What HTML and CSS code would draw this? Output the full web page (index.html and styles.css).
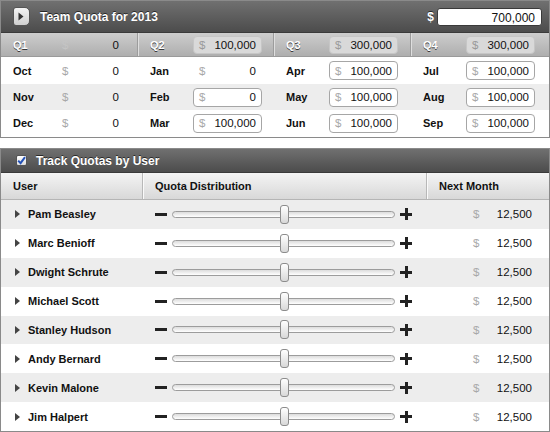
FILE: index.html
```html
<!DOCTYPE html>
<html>
<head>
<meta charset="utf-8">
<link rel="stylesheet" href="styles.css">
</head>
<body>
<div class="panel quota">
  <div class="qhead">
    <span class="disc-btn"><svg width="6" height="9" viewBox="0 0 6 9"><path d="M0.5 0.5 L5.5 4.5 L0.5 8.5 Z" fill="#333"/></svg></span>
    <span class="title">Team Quota for 2013</span>
    <span class="spacer"></span>
    <span class="total-cur">$</span>
    <span class="total-input">700,000</span>
  </div>
  <div class="grid qrow">
    <div class="cell"><span class="lbl">Q1</span><span class="box plain"><span class="d">$</span><span class="v">0</span></span></div>
    <div class="cell"><span class="lbl">Q2</span><span class="box qbox"><span class="d">$</span><span class="v">100,000</span></span></div>
    <div class="cell"><span class="lbl">Q3</span><span class="box qbox"><span class="d">$</span><span class="v">300,000</span></span></div>
    <div class="cell"><span class="lbl">Q4</span><span class="box qbox"><span class="d">$</span><span class="v">300,000</span></span></div>
  </div>
  <div class="grid mrow r1">
    <div class="cell"><span class="lbl">Oct</span><span class="box plain"><span class="d">$</span><span class="v">0</span></span></div>
    <div class="cell"><span class="lbl">Jan</span><span class="box plain"><span class="d">$</span><span class="v">0</span></span></div>
    <div class="cell"><span class="lbl">Apr</span><span class="box input"><span class="d">$</span><span class="v">100,000</span></span></div>
    <div class="cell"><span class="lbl">Jul</span><span class="box input"><span class="d">$</span><span class="v">100,000</span></span></div>
  </div>
  <div class="grid mrow alt">
    <div class="cell"><span class="lbl">Nov</span><span class="box plain"><span class="d">$</span><span class="v">0</span></span></div>
    <div class="cell"><span class="lbl">Feb</span><span class="box input"><span class="d">$</span><span class="v">0</span></span></div>
    <div class="cell"><span class="lbl">May</span><span class="box input"><span class="d">$</span><span class="v">100,000</span></span></div>
    <div class="cell"><span class="lbl">Aug</span><span class="box input"><span class="d">$</span><span class="v">100,000</span></span></div>
  </div>
  <div class="grid mrow">
    <div class="cell"><span class="lbl">Dec</span><span class="box plain"><span class="d">$</span><span class="v">0</span></span></div>
    <div class="cell"><span class="lbl">Mar</span><span class="box input"><span class="d">$</span><span class="v">100,000</span></span></div>
    <div class="cell"><span class="lbl">Jun</span><span class="box input"><span class="d">$</span><span class="v">100,000</span></span></div>
    <div class="cell"><span class="lbl">Sep</span><span class="box input"><span class="d">$</span><span class="v">100,000</span></span></div>
  </div>
</div>

<div class="panel users">
  <div class="uhead">
    <span class="check"><svg width="9" height="9" viewBox="0 0 9 9"><path d="M1.2 4.6 L3.6 7.2 L8 1.2" fill="none" stroke="#2452b8" stroke-width="2"/></svg></span>
    <span class="title">Track Quotas by User</span>
  </div>
  <div class="ugrid colhead">
    <div class="ch c1">User</div>
    <div class="ch c2">Quota Distribution</div>
    <div class="ch c3">Next Month</div>
  </div>
  <div class="rows">
    <div class="ugrid urow alt"><div class="name"><span class="tri"></span>Pam Beasley</div><div class="dist"><span class="minus"></span><span class="track"><span class="thumb"></span></span><span class="plus"></span></div><div class="amt"><span class="d">$</span><span class="v">12,500</span></div></div>
    <div class="ugrid urow"><div class="name"><span class="tri"></span>Marc Benioff</div><div class="dist"><span class="minus"></span><span class="track"><span class="thumb"></span></span><span class="plus"></span></div><div class="amt"><span class="d">$</span><span class="v">12,500</span></div></div>
    <div class="ugrid urow alt"><div class="name"><span class="tri"></span>Dwight Schrute</div><div class="dist"><span class="minus"></span><span class="track"><span class="thumb"></span></span><span class="plus"></span></div><div class="amt"><span class="d">$</span><span class="v">12,500</span></div></div>
    <div class="ugrid urow"><div class="name"><span class="tri"></span>Michael Scott</div><div class="dist"><span class="minus"></span><span class="track"><span class="thumb"></span></span><span class="plus"></span></div><div class="amt"><span class="d">$</span><span class="v">12,500</span></div></div>
    <div class="ugrid urow alt"><div class="name"><span class="tri"></span>Stanley Hudson</div><div class="dist"><span class="minus"></span><span class="track"><span class="thumb"></span></span><span class="plus"></span></div><div class="amt"><span class="d">$</span><span class="v">12,500</span></div></div>
    <div class="ugrid urow"><div class="name"><span class="tri"></span>Andy Bernard</div><div class="dist"><span class="minus"></span><span class="track"><span class="thumb"></span></span><span class="plus"></span></div><div class="amt"><span class="d">$</span><span class="v">12,500</span></div></div>
    <div class="ugrid urow alt"><div class="name"><span class="tri"></span>Kevin Malone</div><div class="dist"><span class="minus"></span><span class="track"><span class="thumb"></span></span><span class="plus"></span></div><div class="amt"><span class="d">$</span><span class="v">12,500</span></div></div>
    <div class="ugrid urow"><div class="name"><span class="tri"></span>Jim Halpert</div><div class="dist"><span class="minus"></span><span class="track"><span class="thumb"></span></span><span class="plus"></span></div><div class="amt"><span class="d">$</span><span class="v">12,500</span></div></div>
  </div>
</div>
</body>
</html>
```

FILE: styles.css
```css
* { box-sizing: border-box; }
html, body { margin: 0; padding: 0; }
body {
  width: 550px;
  height: 432px;
  overflow: hidden;
  background: #fff;
  font-family: "Liberation Sans", Arial, sans-serif;
  color: #111;
}
.panel {
  width: 550px;
  border: 1px solid #8a8a8a;
  display: flex;
  flex-direction: column;
}
.quota { height: 138px; }
.users { height: 284px; margin-top: 10px; }

.qhead, .uhead {
  display: flex;
  align-items: center;
  background: linear-gradient(#707070, #4c4c4c);
  color: #fff;
}
.qhead {
  height: 32px;
  padding: 0 7px 0 12px;
  border-bottom: 1px solid #3a3a3a;
}
.title {
  font-weight: bold;
  font-size: 12px;
  text-shadow: 0 -1px 0 rgba(0,0,0,0.6);
}
.qhead .title { margin-left: 10px; }
.disc-btn {
  width: 17px;
  height: 19px;
  border-radius: 3px 5px 5px 3px;
  background: linear-gradient(#f4f4f4, #cfcfcf);
  border: 1px solid #555;
  display: flex;
  align-items: center;
  justify-content: center;
  padding-right: 1px;
}
.spacer { flex: 1; }
.total-cur {
  font-weight: bold;
  font-size: 12px;
  margin-right: 3px;
  text-shadow: 0 -1px 0 rgba(0,0,0,0.6);
}
.total-input {
  width: 105px;
  height: 18px;
  background: #fff;
  border-radius: 3px;
  border: 1px solid #3a3a3a;
  color: #111;
  font-size: 12px;
  text-align: right;
  padding: 2px 6px 0 0;
}

.grid {
  display: grid;
  grid-template-columns: 136px 136px 137px 1fr;
}
.cell {
  display: flex;
  align-items: center;
  padding-left: 12px;
}
.grid .cell + .cell { border-left: 1px solid transparent; }
.lbl {
  width: 43px;
  font-family: "Liberation Sans", Arial, sans-serif;
  font-weight: bold;
  font-size: 11px;
}
.box {
  width: 69px;
  display: flex;
  align-items: center;
  justify-content: space-between;
  padding: 0 5px 0 5px;
  font-size: 11.5px;
  border-radius: 4px;
}
.box .d { color: #a8a8a8; }
.box .v { color: #111; }

.qrow {
  height: 24px;
  background: linear-gradient(#cdcdcd, #aeaeae);
  border-bottom: 1px solid #9a9a9a;
}
.qrow .cell + .cell {
  border-left: 1px solid #9c9c9c;
  box-shadow: inset 1px 0 0 #dedede;
}
.qrow .lbl {
  color: #fff;
  text-shadow: 0 1px 0 rgba(0,0,0,0.7);
}
.qrow .box { height: 18px; }
.qrow .plain .d { color: #c4c4c4; }
.qbox {
  background: #d9d9d9;
  border: 1px solid #c6c6c6;
}
.qbox .d { color: #9a9a9a; }

.mrow { height: 26px; }
.mrow.r1 { height: 27px; }
.mrow.alt { background: #ededed; }
.box.plain { height: 19px; border: 1px solid transparent; }
.box.input {
  height: 19px;
  background: #fff;
  border: 1px solid #a6a6a6;
}

.uhead {
  height: 24px;
  padding-left: 15px;
  border-bottom: 1px solid #3a3a3a;
}
.check {
  width: 11px;
  height: 11px;
  background: linear-gradient(#fff, #dcdcdc);
  border: 1px solid #555;
  border-radius: 2px;
  display: flex;
  align-items: center;
  justify-content: center;
  margin-right: 9px;
}
.ugrid {
  display: grid;
  grid-template-columns: 141px 284px 1fr;
}
.colhead {
  height: 27px;
  background: linear-gradient(#f4f4f4, #d8d8d8);
  border-bottom: 1px solid #b5b5b5;
}
.ch {
  display: flex;
  align-items: center;
  font-weight: bold;
  font-size: 11px;
  padding-left: 12px;
}
.ch.c2, .ch.c3 {
  border-left: 1px solid #b8b8b8;
  box-shadow: inset 1px 0 0 #fafafa;
}
.rows {
  flex: 1;
  display: flex;
  flex-direction: column;
}
.urow { flex: 1; }
.urow.alt { background: #ededed; }
.name {
  display: flex;
  align-items: center;
  padding-left: 14px;
  font-weight: bold;
  font-size: 11px;
}
.tri {
  width: 0;
  height: 0;
  border-top: 4px solid transparent;
  border-bottom: 4px solid transparent;
  border-left: 5px solid #444;
  margin-right: 8px;
}
.dist {
  display: flex;
  align-items: center;
  padding-left: 13px;
}
.minus {
  width: 12px;
  height: 3px;
  background: #222;
}
.track {
  position: relative;
  width: 223px;
  height: 7px;
  margin: 0 5px;
  border: 1px solid #9c9c9c;
  border-radius: 4px;
  background: linear-gradient(#dcdcdc, #fff);
}
.thumb {
  position: absolute;
  left: 107px;
  top: -7px;
  width: 9px;
  height: 19px;
  border: 1px solid #8c8c8c;
  border-radius: 3px;
  background: linear-gradient(#ffffff, #d8d8d8);
}
.plus {
  position: relative;
  width: 12px;
  height: 12px;
}
.plus::before, .plus::after {
  content: "";
  position: absolute;
  background: #222;
}
.plus::before { left: 0; top: 4.5px; width: 12px; height: 3px; }
.plus::after { left: 4.5px; top: 0; width: 3px; height: 12px; }
.amt {
  display: flex;
  align-items: center;
  justify-content: space-between;
  padding: 0 17px 0 47px;
  font-size: 11.5px;
}
.amt .d { color: #a8a8a8; }
```
